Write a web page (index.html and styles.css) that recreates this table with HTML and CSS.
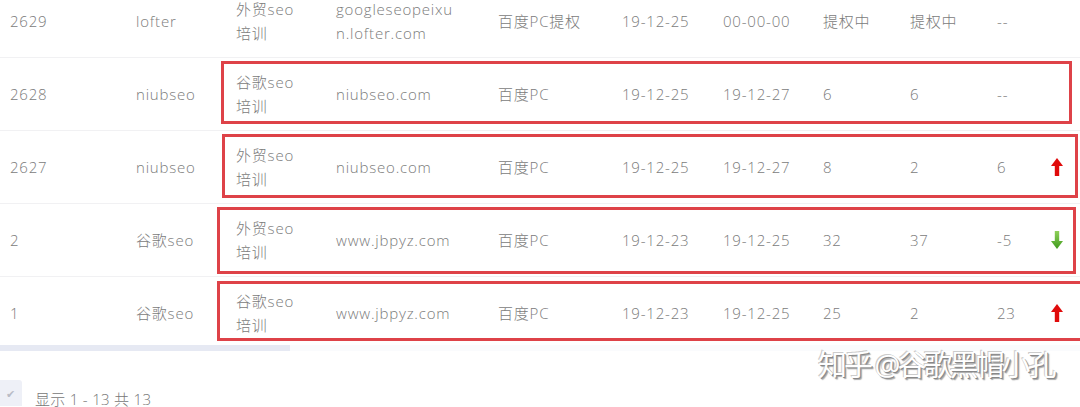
FILE: index.html
```html
<!DOCTYPE html>
<html lang="zh-CN">
<head>
  <meta charset="UTF-8">
  <title>排名列表</title>
  <link rel="stylesheet" href="styles.css">
</head>
<body>

  <div class="table-wrap">
    <div class="rank-table">

      <div class="row">
        <div class="cell c-id">2629</div>
        <div class="cell c-name">lofter</div>
        <div class="cell c-kw">外贸seo培训</div>
        <div class="cell c-domain c-domain-long">googleseopeixu<wbr>n.lofter.com</div>
        <div class="cell c-engine">百度PC提权</div>
        <div class="cell c-date">19-12-25</div>
        <div class="cell c-date">00-00-00</div>
        <div class="cell c-num">提权中</div>
        <div class="cell c-num">提权中</div>
        <div class="cell c-diff">--</div>
        <div class="cell c-arrow"></div>
      </div>

      <div class="row">
        <span class="mark mark-1"></span>
        <div class="cell c-id">2628</div>
        <div class="cell c-name">niubseo</div>
        <div class="cell c-kw">谷歌seo培训</div>
        <div class="cell c-domain">niubseo.com</div>
        <div class="cell c-engine">百度PC</div>
        <div class="cell c-date">19-12-25</div>
        <div class="cell c-date">19-12-27</div>
        <div class="cell c-num">6</div>
        <div class="cell c-num">6</div>
        <div class="cell c-diff">--</div>
        <div class="cell c-arrow"></div>
      </div>

      <div class="row">
        <span class="mark mark-2"></span>
        <div class="cell c-id">2627</div>
        <div class="cell c-name">niubseo</div>
        <div class="cell c-kw">外贸seo培训</div>
        <div class="cell c-domain">niubseo.com</div>
        <div class="cell c-engine">百度PC</div>
        <div class="cell c-date">19-12-25</div>
        <div class="cell c-date">19-12-27</div>
        <div class="cell c-num">8</div>
        <div class="cell c-num">2</div>
        <div class="cell c-diff">6</div>
        <div class="cell c-arrow">
          <svg class="arrow" width="12" height="18" viewBox="0 0 12 18"><path d="M6 0 L12 8 L8.2 8 L8.2 18 L3.8 18 L3.8 8 L0 8 Z" fill="#e00b0b"/></svg>
        </div>
      </div>

      <div class="row">
        <span class="mark mark-3"></span>
        <div class="cell c-id">2</div>
        <div class="cell c-name">谷歌seo</div>
        <div class="cell c-kw">外贸seo培训</div>
        <div class="cell c-domain">www.jbpyz.com</div>
        <div class="cell c-engine">百度PC</div>
        <div class="cell c-date">19-12-23</div>
        <div class="cell c-date">19-12-25</div>
        <div class="cell c-num">32</div>
        <div class="cell c-num">37</div>
        <div class="cell c-diff">-5</div>
        <div class="cell c-arrow">
          <svg class="arrow" width="12" height="18" viewBox="0 0 12 18">
            <defs>
              <linearGradient id="gdown" x1="0" y1="0" x2="0" y2="1">
                <stop offset="0" stop-color="#8fd05a"/>
                <stop offset="1" stop-color="#3f9a1c"/>
              </linearGradient>
            </defs>
            <path d="M3.8 0 L8.2 0 L8.2 10 L12 10 L6 18 L0 10 L3.8 10 Z" fill="url(#gdown)"/>
          </svg>
        </div>
      </div>

      <div class="row row-last">
        <span class="mark mark-4"></span>
        <div class="cell c-id">1</div>
        <div class="cell c-name">谷歌seo</div>
        <div class="cell c-kw">谷歌seo培训</div>
        <div class="cell c-domain">www.jbpyz.com</div>
        <div class="cell c-engine">百度PC</div>
        <div class="cell c-date">19-12-23</div>
        <div class="cell c-date">19-12-25</div>
        <div class="cell c-num">25</div>
        <div class="cell c-num">2</div>
        <div class="cell c-diff">23</div>
        <div class="cell c-arrow">
          <svg class="arrow" width="12" height="18" viewBox="0 0 12 18"><path d="M6 0 L12 8 L8.2 8 L8.2 18 L3.8 18 L3.8 8 L0 8 Z" fill="#e00b0b"/></svg>
        </div>
      </div>

    </div>
    <div class="scrollbar"><div class="scroll-thumb"></div></div>
  </div>

  <div class="pager">
    <span class="check-box">✔</span>
    <span class="pager-info">显示 1 - 13 共 13</span>
  </div>

  <div class="watermark">知乎 @谷歌黑帽小孔</div>

</body>
</html>
```

FILE: styles.css
```css
body {
  margin: 0;
  background: #fff;
  font-family: "Open Sans", "Noto Sans CJK SC", sans-serif;
  font-weight: 300;
  color: #7b7b7b;
  font-size: 15px;
  letter-spacing: 0.8px;
  overflow: hidden;
  position: relative;
  height: 407px;
}

.table-wrap {
  margin-top: -15px;
}

.row {
  position: relative;
  display: grid;
  grid-template-columns: 126px 100px 100px 162px 124px 101px 100px 87px 87px 48px 45px;
  align-items: center;
  height: 72px;
  padding-left: 10px;
  border-bottom: 1px solid #f1f1f3;
}

.row-last {
  height: 68px;
  border-bottom: none;
}

.row-last .cell {
  padding-top: 3px;
}

.cell {
  line-height: 24px;
  white-space: nowrap;
}

.c-kw {
  width: 66px;
  white-space: normal;
}

.c-domain-long {
  width: 140px;
  white-space: normal;
}

.c-arrow {
  display: flex;
  align-items: center;
  padding-left: 6px;
}

.arrow {
  display: block;
}

/* red hand-drawn marks around rows */
.mark {
  position: absolute;
  border: 3px solid #de4248;
  box-sizing: border-box;
  pointer-events: none;
}

.mark-1 { left: 221px; top: 3px; width: 851px; height: 63px; }
.mark-2 { left: 222px; top: 3px; width: 856px; height: 64px; }
.mark-3 { left: 217px; top: 3px; width: 859px; height: 67px; }
.mark-4 { left: 217px; top: 4px; width: 870px; height: 60px; }

.scrollbar {
  height: 6px;
  background: #fafbfd;
}

.scroll-thumb {
  width: 290px;
  height: 6px;
  background: #e6e9f3;
}

.pager {
  display: flex;
  align-items: center;
  margin-top: 30px;
  height: 24px;
}

.check-box {
  width: 22px;
  height: 26px;
  background: #eef0f7;
  color: #b9bcc6;
  font-size: 11px;
  display: flex;
  align-items: center;
  justify-content: center;
  border-radius: 0 3px 0 0;
}

.pager-info {
  margin-left: 13px;
  color: #777;
  font-size: 15px;
  letter-spacing: 0.3px;
  padding-top: 10px;
}

.watermark {
  position: absolute;
  left: 818px;
  top: 342px;
  font-size: 29px;
  font-weight: 400;
  color: #fff;
  letter-spacing: -3px;
  white-space: nowrap;
  text-shadow: 1px 1px 0 #888, 2px 2px 1px #aaa, -1px -1px 0 #ccc;
}
```
